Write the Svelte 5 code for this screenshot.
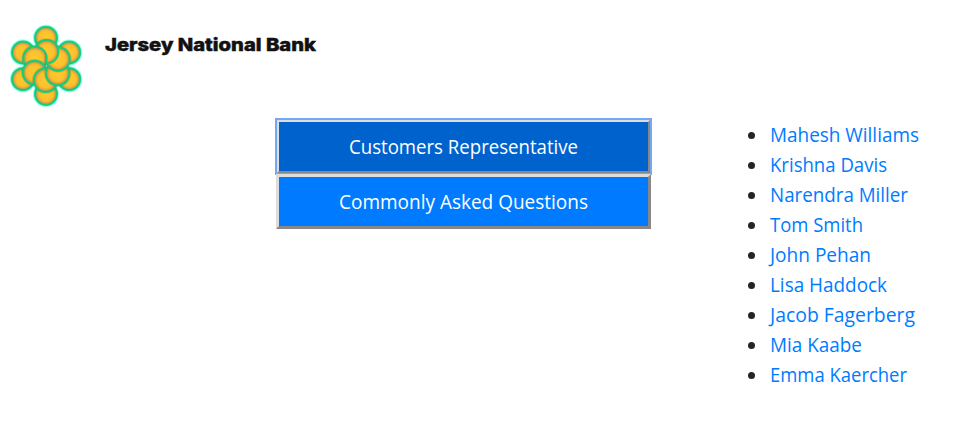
<script>
  const people = [
    ['Mahesh Williams', 149], ['Krishna Davis', 117], ['Narendra Miller', 138],
    ['Tom Smith', 93], ['John Pehan', 101], ['Lisa Haddock', 117],
    ['Jacob Fagerberg', 145], ['Mia Kaabe', 92], ['Emma Kaercher', 137]
  ];
  const outer = [[46, 37.8], [69.2, 52.5], [69.2, 79.2], [46, 94], [23, 79.2], [23, 52.5]];
  const inner = [[46.6, 51.8], [35, 58.4], [34.6, 72.6], [45.6, 80.2], [57.6, 73.4], [58, 59]];
</script>

<header>
  <svg class="logo" width="92" height="112" viewBox="0 0 92 112" aria-hidden="true">
    <defs>
      <radialGradient id="petal">
        <stop offset="0" stop-color="#fcca2a" />
        <stop offset=".6" stop-color="#fac02d" />
        <stop offset=".75" stop-color="#f0a039" />
        <stop offset=".83" stop-color="#79b25c" />
        <stop offset=".89" stop-color="#19c973" />
        <stop offset="1" stop-color="#12d388" />
      </radialGradient>
      <radialGradient id="shade">
        <stop offset=".78" stop-color="#694e12" stop-opacity=".5" />
        <stop offset="1" stop-color="#694e12" stop-opacity="0" />
      </radialGradient>
      <radialGradient id="glow">
        <stop offset=".84" stop-color="#20efc0" />
        <stop offset="1" stop-color="#70ffef" stop-opacity="0" />
      </radialGradient>
      <mask id="behind">
        <rect width="92" height="112" fill="#fff" />
        <rect width="40" height="112" fill="#000" />
        <circle cx="35" cy="58.4" r="12.8" fill="#000" />
      </mask>
    </defs>
    {#each outer as [x, y]}
      <circle cx={x} cy={y} r="13.7" fill="url(#glow)" />
      <circle cx={x} cy={y} r="11.8" fill="url(#petal)" />
    {/each}
    {#each inner as [x, y]}
      <circle cx={x} cy={y} r="14.2" fill="url(#shade)" />
      <circle cx={x} cy={y} r="12.8" fill="url(#petal)" />
    {/each}
    <g mask="url(#behind)">
      <circle cx="46.6" cy="51.8" r="12.8" fill="url(#petal)" />
    </g>
  </svg>
  <svg class="brand" width="230" height="32">
    <text x="0" y="20" textLength="211" lengthAdjust="spacingAndGlyphs">Jersey National Bank</text>
  </svg>
</header>
<main>
  <div class="actions">
    <button class="active"><svg width="229" height="30"><text x="0" y="22" textLength="229" lengthAdjust="spacingAndGlyphs">Customers Representative</text></svg></button>
    <button><svg width="249" height="30"><text x="0" y="22" textLength="249" lengthAdjust="spacingAndGlyphs">Commonly Asked Questions</text></svg></button>
  </div>
  <ul>
    {#each people as [name, width]}
      <li><a href="#top"><svg width="160" height="30"><text x="0" y="22" textLength={width} lengthAdjust="spacingAndGlyphs">{name}</text></svg></a></li>
    {/each}
  </ul>
</main>

<style>
  :global(body) { margin: 0; background: #fff; overflow: hidden; }
  header { display: flex; height: 118px; }
  svg { display: block; overflow: visible; }
  .brand { margin: 31px 0 0 13px; }
  .brand text { font: 800 18px Inter, sans-serif; fill: #111; stroke: #111; stroke-width: .5px; }
  main { display: flex; align-items: flex-start; font: 20px/30px "Open Sans", "Noto Sans", sans-serif; }
  .actions { display: flex; flex-direction: column; width: 375px; margin-left: 276px; padding-top: 1px; }
  button {
    display: flex; align-items: center; justify-content: center;
    box-sizing: border-box; width: 375px; height: 55px; padding: 0;
    border: 3px solid; border-color: #ddd #888 #888 #ddd;
    background: #007bff; font: inherit; color: #fff; position: relative;
  }
  .active { background: #0062cc; outline: 2px solid #76a7f5; outline-offset: -1px; }
  text { fill: currentColor; }
  ul { list-style: none; margin: 2px 0 0 97px; padding: 0; }
  li { display: flex; align-items: center; height: 30px; gap: 15px; }
  li::before { content: ""; width: 7px; height: 7px; border-radius: 50%; background: #212529; }
  a { color: #007bff; text-decoration: none; }
</style>
